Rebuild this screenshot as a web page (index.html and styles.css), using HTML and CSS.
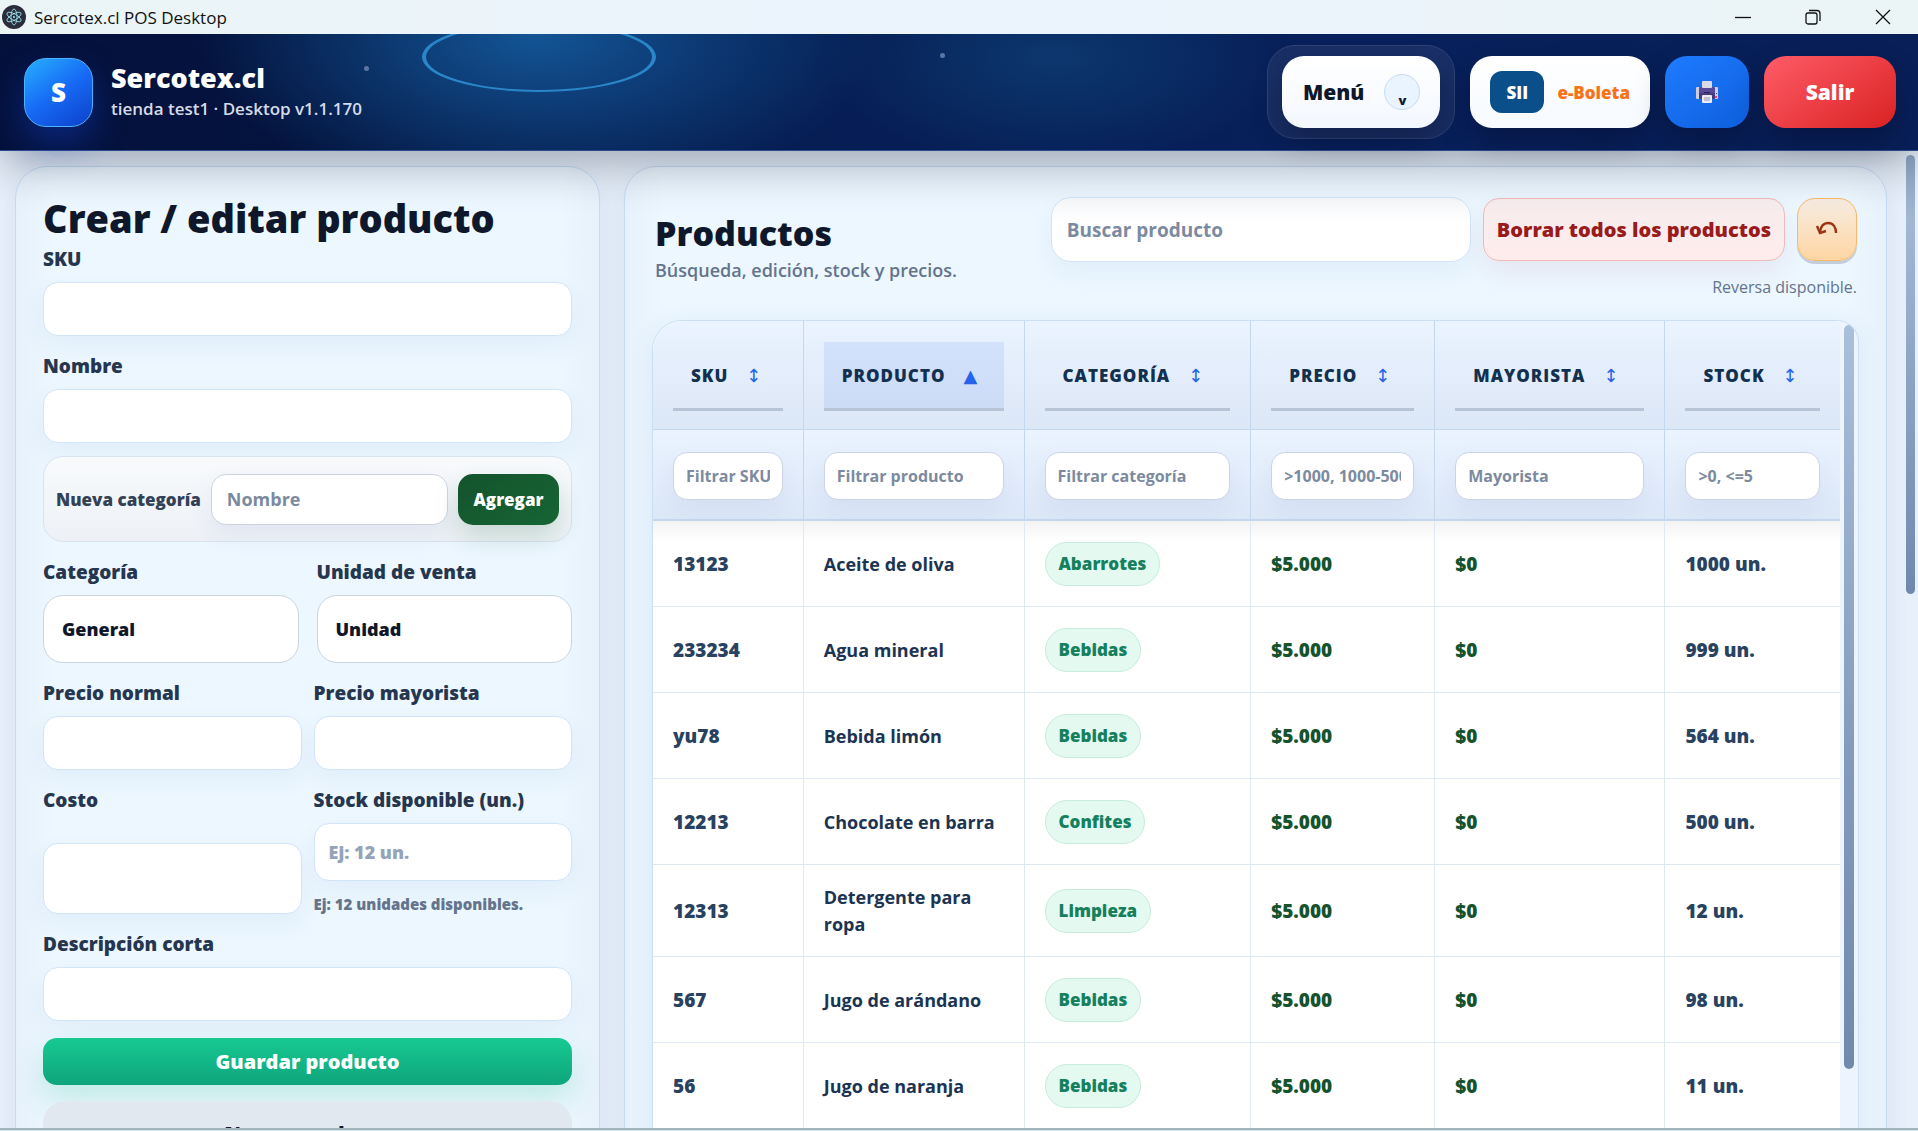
FILE: index.html
```html
<!DOCTYPE html>
<html lang="es">

<head>
    <meta charset="UTF-8">
    <meta name="viewport" content="width=device-width, initial-scale=1.0">
    <title>Sercotex.cl POS Desktop</title>
    <link rel="stylesheet" href="styles.css">
</head>

<body>
    <div class="window">
        <div class="titlebar">
            <svg class="app-icon" viewBox="0 0 24 24" aria-hidden="true">
                <circle cx="12" cy="12" r="12" fill="#2b2e3a" />
                <g fill="none" stroke="#9feaf9" stroke-width="0.8">
                    <ellipse cx="12" cy="12" rx="8" ry="3" transform="rotate(30 12 12)" />
                    <ellipse cx="12" cy="12" rx="8" ry="3" transform="rotate(-30 12 12)" />
                    <ellipse cx="12" cy="12" rx="8" ry="3" transform="rotate(90 12 12)" />
                </g>
                <circle cx="12" cy="12" r="1" fill="#9feaf9" />
            </svg>
            <span class="window-title">Sercotex.cl POS Desktop</span>
            <div class="window-controls">
                <button type="button" aria-label="Minimizar">
                    <svg viewBox="0 0 16 16"><path d="M0 8.5h16" /></svg>
                </button>
                <button type="button" aria-label="Restaurar">
                    <svg viewBox="0 0 16 16"><rect x="1" y="4" width="11" height="11" rx="2" /><path d="M4 1.5h8a3 3 0 0 1 3 3V12" /></svg>
                </button>
                <button type="button" aria-label="Cerrar">
                    <svg viewBox="0 0 16 16"><path d="M1 1l14 14M15 1L1 15" /></svg>
                </button>
            </div>
        </div>

        <header class="topbar">
            <div class="sky" aria-hidden="true">
                <span class="orbit"></span>
                <span class="star star-1"></span>
                <span class="star star-2"></span>
            </div>
            <div class="logo">S</div>
            <div class="brand">
                <strong>Sercotex.cl</strong>
                <span>tienda test1 · Desktop v1.1.170</span>
            </div>
            <nav class="actions">
                <div class="menu-wrap">
                    <button type="button" class="btn-menu">Menú <span class="chevron">v</span></button>
                </div>
                <button type="button" class="btn-boleta"><span class="sii">SII</span> e-Boleta</button>
                <button type="button" class="btn-print" aria-label="Imprimir">
                    <svg viewBox="0 0 22 22" aria-hidden="true">
                        <rect x="0" y="6" width="22" height="12" rx="1" fill="#cfccde" />
                        <rect x="3" y="6" width="16" height="12" rx="1" fill="#564a9c" />
                        <rect x="3" y="12" width="16" height="6" rx="1" fill="#473b82" />
                        <rect x="6" y="0" width="10" height="7" rx="1" fill="#dcd9e6" />
                        <rect x="8" y="11" width="6" height="1" fill="#2c2650" />
                        <rect x="20" y="12" width="1" height="1" fill="#4a4468" />
                        <rect x="19" y="15" width="2" height="2" fill="#f0445c" />
                        <rect x="6" y="14" width="10" height="8" rx="1" fill="#eceaf2" />
                        <path d="M8 17h6M8 19h6" stroke="#9c97b4" />
                    </svg>
                </button>
                <button type="button" class="btn-exit">Salir</button>
            </nav>
        </header>

        <main class="page">
            <section class="panel form-panel">
                <h1>Crear / editar producto</h1>
                <form class="product-form">
                    <div class="field">
                        <label for="sku">SKU</label>
                        <input type="text" id="sku">
                    </div>
                    <div class="field">
                        <label for="nombre">Nombre</label>
                        <input type="text" id="nombre">
                    </div>
                    <div class="new-category">
                        <label for="nueva">Nueva categoría</label>
                        <input type="text" id="nueva" placeholder="Nombre">
                        <button type="button">Agregar</button>
                    </div>
                    <div class="row row-selects">
                        <div class="field">
                            <label for="categoria">Categoría</label>
                            <select id="categoria">
                                <option>General</option>
                            </select>
                        </div>
                        <div class="field">
                            <label for="unidad">Unidad de venta</label>
                            <select id="unidad">
                                <option>Unidad</option>
                            </select>
                        </div>
                    </div>
                    <div class="row">
                        <div class="field">
                            <label for="precio">Precio normal</label>
                            <input type="text" id="precio">
                        </div>
                        <div class="field">
                            <label for="mayorista">Precio mayorista</label>
                            <input type="text" id="mayorista">
                        </div>
                    </div>
                    <div class="row">
                        <div class="field field-cost">
                            <label for="costo">Costo</label>
                            <input type="text" id="costo">
                        </div>
                        <div class="field field-stock">
                            <label for="stock">Stock disponible (un.)</label>
                            <input type="text" id="stock" placeholder="Ej: 12 un.">
                            <small>Ej: 12 unidades disponibles.</small>
                        </div>
                    </div>
                    <div class="field">
                        <label for="descripcion">Descripción corta</label>
                        <input type="text" id="descripcion">
                    </div>
                    <button type="submit" class="btn-save">Guardar producto</button>
                    <button type="reset" class="btn-new">Nuevo producto</button>
                </form>
            </section>

            <section class="panel list-panel">
                <div class="list-head">
                    <div class="list-title">
                        <h2>Productos</h2>
                        <p>Búsqueda, edición, stock y precios.</p>
                    </div>
                    <div class="list-tools">
                        <div class="tools-row">
                            <input type="search" class="search" placeholder="Buscar producto" aria-label="Buscar producto">
                            <button type="button" class="btn-clear">Borrar todos los productos</button>
                            <button type="button" class="btn-undo" aria-label="Deshacer">
                                <svg viewBox="0 0 24 16" aria-hidden="true">
                                    <path d="M5 12C6 5 9 3 13 3C18 3 21 7 21 13" />
                                    <path d="M2 6l3 7 6-2" />
                                </svg>
                            </button>
                        </div>
                        <p class="undo-note">Reversa disponible.</p>
                    </div>
                </div>

                <div class="table-wrap">
                    <table class="products">
                        <colgroup>
                            <col class="c-sku">
                            <col class="c-name">
                            <col class="c-cat">
                            <col class="c-price">
                            <col class="c-whole">
                            <col class="c-stock">
                        </colgroup>
                        <thead>
                            <tr class="sort-row">
                                <th><button type="button">SKU <i>↕</i></button></th>
                                <th><button type="button" class="active">PRODUCTO <i>▲</i></button></th>
                                <th><button type="button">CATEGORÍA <i>↕</i></button></th>
                                <th><button type="button">PRECIO <i>↕</i></button></th>
                                <th><button type="button">MAYORISTA <i>↕</i></button></th>
                                <th><button type="button">STOCK <i>↕</i></button></th>
                            </tr>
                            <tr class="filter-row">
                                <th><input type="text" placeholder="Filtrar SKU" aria-label="Filtrar SKU"></th>
                                <th><input type="text" placeholder="Filtrar producto" aria-label="Filtrar producto"></th>
                                <th><input type="text" placeholder="Filtrar categoría" aria-label="Filtrar categoría"></th>
                                <th><input type="text" placeholder="&gt;1000, 1000-5000" aria-label="Filtrar precio"></th>
                                <th><input type="text" placeholder="Mayorista" aria-label="Filtrar mayorista"></th>
                                <th><input type="text" placeholder="&gt;0, &lt;=5" aria-label="Filtrar stock"></th>
                            </tr>
                        </thead>
                        <tbody>
                            <tr>
                                <td class="code">13123</td>
                                <td>Aceite de oliva</td>
                                <td><span class="pill">Abarrotes</span></td>
                                <td class="money">$5.000</td>
                                <td class="money">$0</td>
                                <td class="code">1000 un.</td>
                            </tr>
                            <tr>
                                <td class="code">233234</td>
                                <td>Agua mineral</td>
                                <td><span class="pill">Bebidas</span></td>
                                <td class="money">$5.000</td>
                                <td class="money">$0</td>
                                <td class="code">999 un.</td>
                            </tr>
                            <tr>
                                <td class="code">yu78</td>
                                <td>Bebida limón</td>
                                <td><span class="pill">Bebidas</span></td>
                                <td class="money">$5.000</td>
                                <td class="money">$0</td>
                                <td class="code">564 un.</td>
                            </tr>
                            <tr>
                                <td class="code">12213</td>
                                <td>Chocolate en barra</td>
                                <td><span class="pill">Confites</span></td>
                                <td class="money">$5.000</td>
                                <td class="money">$0</td>
                                <td class="code">500 un.</td>
                            </tr>
                            <tr>
                                <td class="code">12313</td>
                                <td>Detergente para ropa</td>
                                <td><span class="pill">Limpieza</span></td>
                                <td class="money">$5.000</td>
                                <td class="money">$0</td>
                                <td class="code">12 un.</td>
                            </tr>
                            <tr>
                                <td class="code">567</td>
                                <td>Jugo de arándano</td>
                                <td><span class="pill">Bebidas</span></td>
                                <td class="money">$5.000</td>
                                <td class="money">$0</td>
                                <td class="code">98 un.</td>
                            </tr>
                            <tr>
                                <td class="code">56</td>
                                <td>Jugo de naranja</td>
                                <td><span class="pill">Bebidas</span></td>
                                <td class="money">$5.000</td>
                                <td class="money">$0</td>
                                <td class="code">11 un.</td>
                            </tr>
                        </tbody>
                    </table>
                    <div class="table-scroll"><span></span></div>
                </div>
            </section>

            <div class="page-scroll"><span></span></div>
        </main>
    </div>
</body>

</html>
```
FILE: styles.css
```css
* {
    box-sizing: border-box;
}

body {
    margin: 0;
    font-family: "Open Sans", "Noto Sans", sans-serif;
    font-size: 18px;
    color: #0f172a;
    background: #cfe3e8;
}

h1,
h2,
p {
    margin: 0;
}

button,
input,
select {
    font-family: inherit;
    margin: 0;
}

button {
    border: 0;
    padding: 0;
    cursor: pointer;
}

.window {
    height: calc(100vh - 1px);
    display: flex;
    flex-direction: column;
    overflow: hidden;
    border-bottom: 2px solid #a0b5bd;
}

/* window title bar */

.titlebar {
    flex: none;
    height: 34px;
    display: flex;
    align-items: center;
    gap: 8px;
    padding-left: 2px;
    background: linear-gradient(90deg, #ebf5f6, #ebf3fc 40%, #ebf3fc 60%, #ebf5f6);
    position: relative;
    z-index: 3;
}

.app-icon {
    width: 24px;
    height: 24px;
}

.window-title {
    flex: 1;
    font-size: 17px;
    color: #111;
}

.window-controls {
    display: flex;
}

.window-controls button {
    width: 70px;
    height: 34px;
    display: flex;
    align-items: center;
    justify-content: center;
    background: none;
}

.window-controls svg {
    width: 16px;
    height: 16px;
    fill: none;
    stroke: #111;
    stroke-width: 1.3;
}

/* top bar */

.topbar {
    flex: none;
    height: 117px;
    position: relative;
    z-index: 2;
    display: flex;
    align-items: center;
    padding: 0 22px 0 24px;
    border-bottom: 1px solid #2a4a8a;
    background:
        radial-gradient(ellipse 340px 170px at 28% 0, #135596, rgba(19, 85, 150, 0) 100%),
        radial-gradient(ellipse 230px 110px at 55% 20%, rgba(14, 66, 120, 0.7), rgba(14, 66, 120, 0) 100%),
        linear-gradient(90deg, #04113b, #04143f 18%, #061e54 42%, #08205c 75%, #081f58);
    box-shadow: 0 14px 44px rgba(15, 23, 42, 0.32);
}

.sky {
    position: absolute;
    inset: 0;
    overflow: hidden;
}

.orbit {
    position: absolute;
    left: 22%;
    top: -12px;
    width: 234px;
    height: 70px;
    border: 3px solid #2a86c9;
    border-width: 2px 4px;
    border-radius: 50%;
}

.star {
    position: absolute;
    width: 5px;
    height: 5px;
    border-radius: 50%;
    background: #5b76a5;
}

.star-1 {
    left: 19%;
    top: 32px;
}

.star-2 {
    left: 49%;
    top: 19px;
}

.logo {
    position: relative;
    width: 69px;
    height: 69px;
    display: flex;
    align-items: center;
    justify-content: center;
    border: 1px solid #4fb4ff;
    border-radius: 22px;
    background: linear-gradient(145deg, #26b0ff, #176af5 50%, #0c40c8);
    box-shadow: 0 16px 34px rgba(20, 70, 220, 0.4);
    color: #fff;
    font-size: 26px;
    font-weight: 800;
}

.brand {
    position: relative;
    margin-left: 18px;
    display: flex;
    flex-direction: column;
    color: #d5dbe8;
    font-size: 17px;
    font-weight: 600;
    line-height: 28px;
}

.brand strong {
    color: #fff;
    font-size: 27px;
    font-weight: 800;
    line-height: 34px;
}

.actions {
    position: relative;
    margin-left: auto;
    display: flex;
    align-items: center;
    gap: 15px;
}

.actions button {
    height: 72px;
    border-radius: 22px;
    font-weight: 800;
    display: flex;
    align-items: center;
    justify-content: center;
    box-shadow: 0 14px 30px rgba(0, 0, 20, 0.3);
}

.menu-wrap {
    padding: 10px 14px;
    border: 1px solid #2f4474;
    border-radius: 28px;
    background: rgba(255, 255, 255, 0.07);
}

.actions .btn-menu {
    gap: 20px;
    padding: 0 20px 0 21px;
    background: linear-gradient(#fff, #f3f7fe);
    color: #0f172a;
    font-size: 21px;
}

.chevron {
    width: 36px;
    height: 36px;
    display: flex;
    align-items: flex-end;
    justify-content: center;
    border: 1px solid #c3dbf5;
    border-radius: 50%;
    background: #eaf4ff;
    font-size: 13px;
}

.actions .btn-boleta {
    gap: 13px;
    padding: 0 20px;
    background: linear-gradient(#fff, #f6faff);
    color: #f97316;
    font-size: 17px;
}

.sii {
    width: 54px;
    height: 42px;
    border-radius: 12px;
    display: flex;
    align-items: center;
    justify-content: center;
    background: #0b4f8a;
    color: #fff;
}

.actions .btn-print {
    width: 84px;
    background: linear-gradient(145deg, #1f7bff, #0d5fdc);
}

.btn-print svg {
    width: 22px;
    height: 22px;
}

.actions .btn-exit {
    width: 132px;
    background: linear-gradient(145deg, #ff5c68, #d92222);
    color: #fff;
    font-size: 21px;
}

/* page */

.page {
    flex: 1;
    min-height: 0;
    overflow: hidden;
    display: grid;
    grid-template-columns: 585fr 24px 1263fr 31px;
    padding: 15px 0 0 15px;
    background: #e8f1fb;
}

.panel {
    border: 1px solid #c5dcf3;
    border-radius: 32px 32px 0 0;
    background: linear-gradient(90deg, #e6f1fb, #ecf7ff 40px, #ecf7ff calc(100% - 40px), #e6f1fb);
    box-shadow: 0 10px 30px rgba(70, 90, 160, 0.1);
}

.form-panel {
    padding: 28px 27px 0;
}

.form-panel h1 {
    font-size: 38px;
    font-weight: 800;
    line-height: 47px;
    white-space: nowrap;
}

.product-form {
    display: flex;
    flex-direction: column;
}

.field {
    display: flex;
    flex-direction: column;
    margin-bottom: 13px;
}

.field label {
    font-size: 19px;
    font-weight: 800;
    line-height: 34px;
    margin-bottom: 6px;
    color: #26364f;
}

.field input,
.field select {
    width: 100%;
    height: 54px;
    padding: 0 14px;
    border: 1px solid #d2e4f8;
    border-radius: 15px;
    background: #fff;
    color: #0f172a;
    font-size: 18px;
    font-weight: 800;
    box-shadow: 0 10px 24px rgba(50, 90, 160, 0.06);
}

.field ::placeholder {
    color: #94a3b8;
}

.row {
    display: grid;
    grid-template-columns: 1fr 1fr;
    column-gap: 12px;
}

.row-selects {
    column-gap: 18px;
}

.field select {
    height: 68px;
    padding: 0 18px;
    border-color: #cbd5e1;
    border-radius: 20px;
    appearance: none;
    box-shadow: none;
}

.field-cost {
    justify-content: space-between;
}

.field-cost input {
    height: 71px;
}

.field-stock input {
    height: 58px;
}

.field small {
    margin-top: 14px;
    color: #64748b;
    font-size: 15px;
    font-weight: 800;
    line-height: 19px;
}

.new-category {
    display: flex;
    align-items: center;
    gap: 10px;
    height: 86px;
    margin-bottom: 13px;
    padding: 0 12px;
    border: 1px solid #d9e2ee;
    border-radius: 20px;
    background: linear-gradient(#f8fafc, #edf1f6);
}

.new-category label {
    flex: none;
    color: #334155;
    font-size: 17px;
    font-weight: 800;
}

.new-category input {
    flex: 1;
    min-width: 0;
    height: 51px;
    padding: 0 15px;
    border: 1px solid #cbd5e1;
    border-radius: 15px;
    font-size: 18px;
    font-weight: 700;
    box-shadow: 0 10px 24px rgba(50, 60, 160, 0.07);
}

.new-category ::placeholder {
    color: #7c8aa0;
}

.new-category button {
    width: 101px;
    height: 51px;
    border-radius: 15px;
    background: linear-gradient(145deg, #14532d, #166534);
    box-shadow: 0 12px 24px rgba(22, 101, 52, 0.18);
    color: #fff;
    font-size: 17px;
    font-weight: 800;
}

.btn-save {
    height: 47px;
    margin: 4px 0 16px;
    border-radius: 14px;
    background: linear-gradient(#18c991, #0ea57c);
    box-shadow: 0 14px 28px rgba(16, 185, 129, 0.2);
    color: #fff;
    font-size: 20px;
    font-weight: 800;
}

.btn-new {
    height: 64px;
    border-radius: 22px;
    background: #e2e8f0;
    color: #0f172a;
    font-size: 20px;
    font-weight: 800;
}

/* product list */

.list-panel {
    grid-column: 3;
    padding: 30px 27px 0;
    display: flex;
    flex-direction: column;
}

.list-head {
    display: flex;
    justify-content: space-between;
    height: 123px;
    padding: 0 2px 0 3px;
}

.list-title {
    padding-top: 14px;
}

.list-title h2 {
    font-size: 34px;
    font-weight: 800;
    line-height: 44px;
}

.list-title p {
    color: #64748b;
    font-size: 18px;
    font-weight: 600;
    line-height: 30px;
}

.tools-row {
    display: flex;
    align-items: center;
    gap: 12px;
}

.search {
    width: 420px;
    height: 65px;
    padding: 0 15px;
    border: 1px solid #d2e4f8;
    border-radius: 20px;
    background: linear-gradient(#f6f7f9, #fff 40%);
    font-size: 19px;
    font-weight: 700;
    box-shadow: 0 10px 24px rgba(50, 90, 160, 0.06);
}

.search::placeholder {
    color: #7c8aa0;
}

.btn-clear {
    height: 63px;
    padding: 0 13px;
    border: 1px solid #f3b8b8;
    border-radius: 16px;
    background: linear-gradient(#f6ecee, #ffecec);
    box-shadow: 0 12px 24px rgba(150, 50, 80, 0.08);
    color: #991b1b;
    font-size: 20px;
    font-weight: 800;
    white-space: nowrap;
}

.btn-undo {
    width: 60px;
    height: 63px;
    border: 1px solid #f9b866;
    border-radius: 18px;
    background: linear-gradient(#f6ece2, #ffd6a3);
    box-shadow: 0 3px 0 #c3cedb;
}

.btn-undo svg {
    width: 24px;
    height: 16px;
    fill: none;
    stroke: #9a3412;
    stroke-width: 2.4;
}

.undo-note {
    margin-top: 11px;
    color: #64748b;
    font-size: 16px;
    line-height: 28px;
    text-align: right;
}

.table-wrap {
    flex: 1;
    display: flex;
    overflow: hidden;
    border: 1px solid #cbdff2;
    border-bottom: 0;
    border-radius: 30px 22px 0 0;
    background: #edf4fe;
    box-shadow: 0 4px 24px rgba(50, 90, 160, 0.08);
}

.products {
    flex: 1;
    height: 0;
    table-layout: fixed;
    border-collapse: separate;
    border-spacing: 0;
    background: #fff;
}

.c-sku {
    width: 12.7%;
}

.c-name {
    width: 18.6%;
}

.c-cat {
    width: 19.1%;
}

.c-price {
    width: 15.5%;
}

.c-whole {
    width: 19.4%;
}

.c-stock {
    width: 14.7%;
}

.products th,
.products td {
    padding: 19px 20px 18px;
    text-align: left;
    border-right: 1px solid #dfe9f5;
    border-bottom: 1px solid #dfe9f5;
}

.products th:last-child,
.products td:last-child {
    border-right: 0;
}

.products th {
    padding: 3px 20px 0;
    background: linear-gradient(#eaf3ff, #dce7f7);
    border-color: #c5d7ec;
}

.sort-row th {
    height: 109px;
}

.sort-row button {
    width: 100%;
    height: 69px;
    padding: 0 18px;
    display: flex;
    align-items: center;
    gap: 18px;
    border-bottom: 3px solid #b7c4d6;
    background: none;
    color: #12304f;
    font-size: 17px;
    font-weight: 800;
    letter-spacing: 1px;
}

.sort-row .active {
    background: rgba(37, 99, 235, 0.1);
}

.sort-row i {
    color: #2563eb;
    font-family: "DejaVu Sans", sans-serif;
    font-size: 18px;
    font-style: normal;
    font-weight: 400;
    letter-spacing: 0;
}

.filter-row th {
    height: 91px;
    border-bottom-width: 2px;
}

.filter-row input {
    width: 100%;
    height: 48px;
    padding: 0 12px;
    border: 1px solid #cbd5e1;
    border-radius: 14px;
    background: #fff;
    font-size: 16px;
    font-weight: 700;
    box-shadow: 0 10px 24px rgba(50, 60, 160, 0.06);
}

.filter-row ::placeholder {
    color: #7c8aa0;
}

.products td {
    height: 86px;
    color: #1b3452;
    font-size: 18px;
    font-weight: 700;
    line-height: 27px;
}

.products tr:first-child td {
    background: linear-gradient(#f3f3f3, #fff 20px);
}

.products .code {
    color: #28425f;
    font-size: 19px;
    font-weight: 800;
}

.products .money {
    color: #14532d;
    font-size: 19px;
    font-weight: 800;
}

.pill {
    display: inline-block;
    padding: 8px 13px;
    border: 1px solid #c6eddb;
    border-radius: 22px;
    background: #e4f9f0;
    color: #15805d;
    font-size: 17px;
    font-weight: 800;
    line-height: 26px;
    vertical-align: middle;
}

/* scrollbars */

.table-scroll {
    width: 18px;
    padding: 4px;
}

.table-scroll span {
    display: block;
    height: 89%;
    border-radius: 5px;
    background: linear-gradient(#a9bfda, #8299bb 60%, #6f8aab);
}

.page-scroll {
    margin-top: -11px;
    padding-left: 19px;
}

.page-scroll span {
    display: block;
    width: 9px;
    height: 439px;
    border-radius: 5px;
    background: linear-gradient(#8fa8c6, #a1b7d4 15%, #6f89ad);
}
```
